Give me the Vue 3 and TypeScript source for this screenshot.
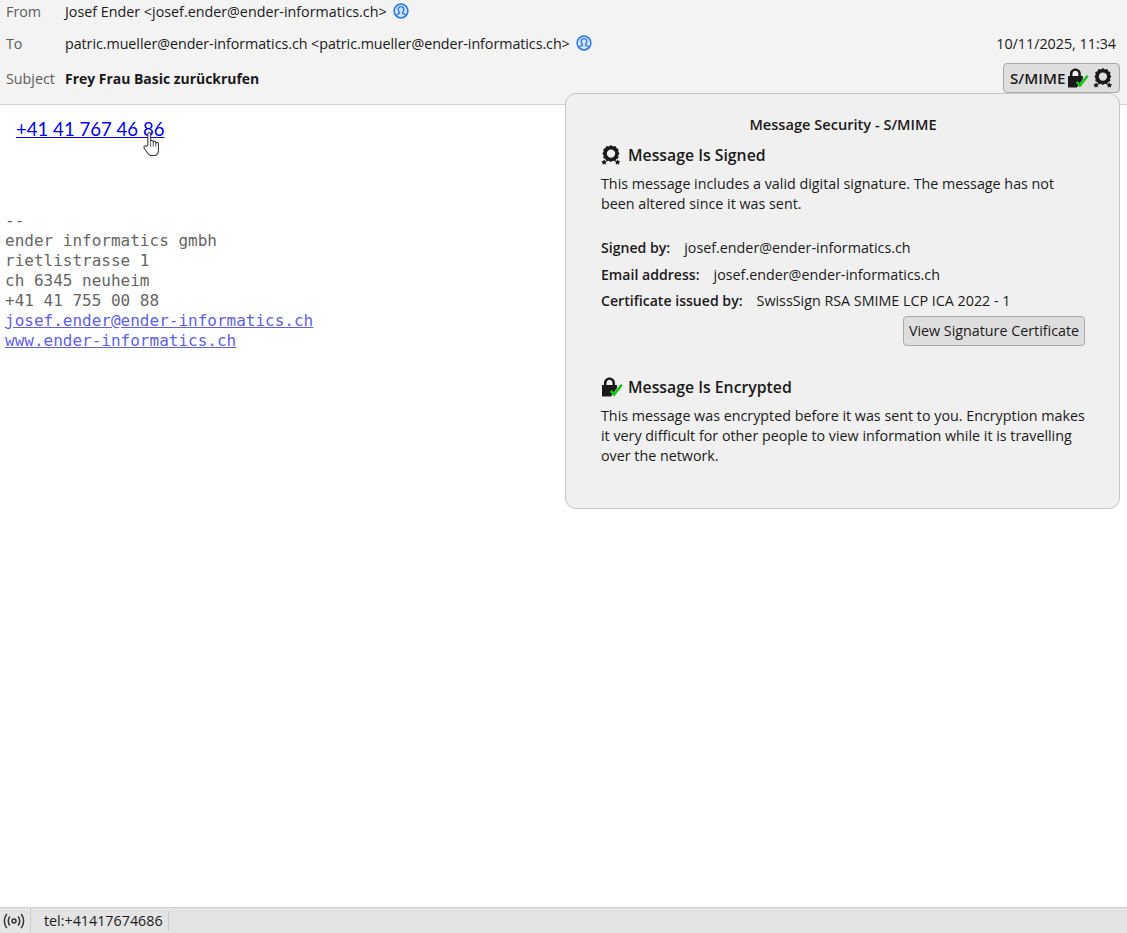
<script setup lang="ts">
const signature: string[] = ['--', 'ender informatics gmbh', 'rietlistrasse 1', 'ch 6345 neuheim', '+41 41 755 00 88']
const details = [
  { label: 'Signed by:', value: 'josef.ender@ender-informatics.ch' },
  { label: 'Email address:', value: 'josef.ender@ender-informatics.ch' },
  { label: 'Certificate issued by:', value: 'SwissSign RSA SMIME LCP ICA 2022 - 1' },
]
</script>

<template>
  <div class="app">
    <svg width="0" height="0" class="defs" aria-hidden="true">
      <symbol id="person" viewBox="0 0 16 16">
        <circle cx="8" cy="8" r="6.9" fill="#cfe2fb" stroke="#2a78e4" stroke-width="1.5" />
        <path d="M8 3.600c-1.700 0-2.800 1.300-2.800 3 0 1.200.5 2.200 1.200 2.800v.9c-1.200.3-2.300.9-3 1.800M8 3.600c1.700 0 2.800 1.300 2.800 3 0 1.200-.5 2.200-1.200 2.800v.9c1.200.3 2.300.9 3 1.800" fill="none" stroke="#2a78e4" stroke-width="1.300" />
      </symbol>
      <symbol id="seal" viewBox="0 0 20 20">
        <path fill-rule="evenodd" d="M10 0l2 1.400 2.400-.4 1.100 2.100 2.100 1.100-.4 2.400 1.300 2-1.400 2 .4 2.400-2.100 1.100-1.100 2.100-2.400-.4-2 1.300-2-1.300-2.400.4-1.100-2.100L2.300 13l.4-2.400-1.300-2 1.300-2-.4-2.400 2.100-1.100L5.600 1 8 1.400zM10 4.400a4.200 4.200 0 1 0 0 8.400 4.200 4.200 0 0 0 0-8.400z" fill="#1a1a1a" />
        <path d="M3.300 14.500l.8 1.500 1.800.5-1.300 1.200.2 2-1.700-.9-1.700.9.200-2L.3 16.500l1.800-.5zM16.700 14.500l.8 1.500 1.800.5-1.300 1.200.2 2-1.700-.9-1.700.9.200-2-1.300-1.200 1.800-.5z" fill="#1a1a1a" />
      </symbol>
      <symbol id="lock" viewBox="0 0 22 20">
        <path d="M1 8h2V6C3 2.800 5.500.5 8.500.5S14 2.800 14 6v2h2v3l-6 8.500H1z" fill="#1a1a1a" />
        <path d="M5.500 8V6c0-1.800 1.200-3.200 3-3.200s3 1.400 3 3.200v2z" fill="#f0f0f0" />
        <path d="M9.800 13.800l3.200 3.800L20.800 7.800" fill="none" stroke="#14c414" stroke-width="2.600" />
      </symbol>
    </svg>

    <header class="head">
      <div class="row row-from">
        <span class="key">From</span>
        <span class="val">Josef Ender &lt;josef.ender@ender-informatics.ch&gt;</span>
        <svg class="person" width="16" height="16"><use href="#person" /></svg>
      </div>
      <div class="row row-to">
        <span class="key">To</span>
        <span class="val tight">patric.mueller@ender-informatics.ch &lt;patric.mueller@ender-informatics.ch&gt;</span>
        <svg class="person" width="16" height="16"><use href="#person" /></svg>
        <span class="date">10/11/2025, 11:34</span>
      </div>
      <div class="row row-subject">
        <span class="key">Subject</span>
        <strong class="subject">Frey Frau Basic zurückrufen</strong>
        <button class="smime" type="button">
          <span class="smime-label">S/MIME</span>
          <svg width="22" height="20"><use href="#lock" /></svg>
          <svg class="smime-seal" width="20" height="20"><use href="#seal" /></svg>
        </button>
      </div>
    </header>

    <main class="body">
      <p class="phone-line">
        <a class="phone" href="#">+41 41 767 46 86</a>
        <svg class="cursor" width="20" height="26" viewBox="0 0 19 25">
          <path d="M5.500 13.500V3c0-2 2.700-2 2.700 0v7c0-1.500 2.500-1.500 2.500 0v1c0-1.500 2.500-1.500 2.500 0v1c0-1.500 2.500-1.500 2.500 0v6.500c0 3-1.500 4.500-3 5H8c-2-.8-3.500-3.500-6-7-1-1.500.8-3 2.200-1.800z" fill="#fff" stroke="#333" stroke-width="1" stroke-linejoin="round" />
          <path d="M8.200 11v4M10.700 11v4M13.200 12v3" stroke="#333" stroke-width=".8" fill="none" />
        </svg>
      </p>
      <pre class="sig"><template v-for="line in signature" :key="line">{{ line }}
</template><a class="sig-link" href="#">josef.ender@ender-informatics.ch</a>
<a class="sig-link" href="#">www.ender-informatics.ch</a></pre>
    </main>

    <footer class="status">
      <span class="status-icon">
        <svg width="22" height="18" viewBox="0 0 22 18" fill="none" stroke="#333" stroke-width="1.500">
          <circle cx="11" cy="9" r="2" />
          <path d="M6.800 4.500c-2 2.500-2 6.500 0 9M15.200 4.500c2 2.500 2 6.500 0 9M3.800 2c-3.200 4-3.200 10 0 14M18.200 2c3.200 4 3.200 10 0 14" />
        </svg>
      </span>
      <span class="status-text">tel:+41417674686</span>
    </footer>

    <section class="panel">
      <h1 class="panel-title">Message Security - S/MIME</h1>
      <h2 class="panel-heading">
        <svg width="20" height="20"><use href="#seal" /></svg>
        Message Is Signed
      </h2>
      <p class="panel-text">This message includes a valid digital signature. The message has not been altered since it was sent.</p>
      <dl class="details">
        <div v-for="item in details" :key="item.label" class="detail">
          <dt>{{ item.label }}</dt>
          <dd>{{ item.value }}</dd>
        </div>
      </dl>
      <div class="cert-row">
        <button class="cert" type="button">View Signature Certificate</button>
      </div>
      <h2 class="panel-heading enc">
        <svg width="22" height="20"><use href="#lock" /></svg>
        Message Is Encrypted
      </h2>
      <p class="panel-text">This message was encrypted before it was sent to you. Encryption makes it very difficult for other people to view information while it is travelling over the network.</p>
    </section>
  </div>
</template>

<style>
html, body { margin: 0; background: #fff; }
</style>

<style scoped>
.app {
  position: relative;
  height: 933px;
  overflow: hidden;
  display: flex;
  flex-direction: column;
  font-family: "Open Sans", "Noto Sans", sans-serif;
  font-size: 14.3px;
  color: #1a1a1a;
}
.defs { position: absolute; }
.head {
  height: 104px;
  flex: none;
  background: #f3f3f3;
  border-bottom: 1px solid #d2d2d2;
  padding: 0 7px 0 6px;
}
.row { display: flex; align-items: center; }
.row-from { height: 22px; }
.row-to { height: 20px; margin-top: 11px; }
.row-subject { height: 30px; margin-top: 10px; }
.key { width: 59px; color: #5c5c5c; flex: none; }
.tight { letter-spacing: -0.055px; }
.person { margin-left: 6px; }
.date { margin-left: auto; margin-right: 4px; }
.subject { font-weight: 700; font-size: 13.950px; }
.smime {
  margin-left: auto;
  width: 117px;
  height: 30px;
  box-sizing: border-box;
  display: flex;
  align-items: center;
  padding: 0 6px;
  gap: 2px;
  background: #dedede;
  border: 1px solid #a9a9a9;
  border-radius: 4px;
  font: inherit;
  color: inherit;
}
.smime-label { font-size: 15.200px; font-weight: 600; }
.smime-seal { margin-left: 2px; }
.body { flex: 1; min-height: 0; }
.phone-line { position: relative; margin: 12px 0 0 16px; width: max-content; line-height: 24px; }
.phone {
  font-family: Lato, sans-serif;
  font-size: 18.600px;
  color: #0000ee;
}
.cursor { position: absolute; left: 126px; top: 14px; }
.sig {
  margin: 68px 0 0 5px;
  font-family: "DejaVu Sans Mono", monospace;
  font-size: 16px;
  line-height: 20px;
  color: #666;
}
.sig-link { color: #5f5fe8; }
.status {
  height: 26px;
  flex: none;
  box-sizing: border-box;
  display: flex;
  align-items: center;
  background: #e4e4e4;
  border-top: 1px solid #cfcfcf;
}
.status-icon {
  width: 31px;
  height: 100%;
  box-sizing: border-box;
  border-right: 1px solid #cbcbcb;
  display: flex;
  align-items: center;
  padding-left: 3px;
}
.status-text {
  width: 138px;
  height: 19px;
  line-height: 19px;
  padding-left: 13px;
  box-sizing: border-box;
  border-right: 1px solid #cbcbcb;
  font-size: 14.300px;
}
.panel {
  position: absolute;
  left: 565px;
  top: 93px;
  width: 555px;
  height: 416px;
  box-sizing: border-box;
  padding: 20px 34px 0 35px;
  background: #f0f0f0;
  border: 1px solid #c6c6c6;
  border-radius: 11px;
}
.panel-title {
  margin: 0;
  text-align: center;
  font-size: 14.600px;
  font-weight: 600;
  line-height: 20px;
}
.panel-heading {
  margin: 9px 0 0;
  height: 24px;
  display: flex;
  align-items: center;
  gap: 7px;
  font-size: 15.800px;
  font-weight: 600;
}
.panel-heading.enc { margin-top: 29px; gap: 5px; }
.panel-text { margin: 7px 0 0; line-height: 20px; }
.panel-heading.enc + .panel-text { margin-top: 7px; }
.details { margin: 20px 0 0; }
.detail { display: flex; height: 26.500px; align-items: center; gap: 14px; }
.detail:nth-child(2) { padding-top: 1px; box-sizing: border-box; }
.detail dt { font-weight: 600; font-size: 14.100px; }
.detail dd { margin: 0; }
.cert-row { display: flex; justify-content: flex-end; margin-top: 2px; }
.cert {
  height: 30px;
  width: 182px;
  padding: 0;
  background: #dedede;
  border: 1px solid #a9a9a9;
  border-radius: 4px;
  font: inherit;
  color: inherit;
}
</style>
